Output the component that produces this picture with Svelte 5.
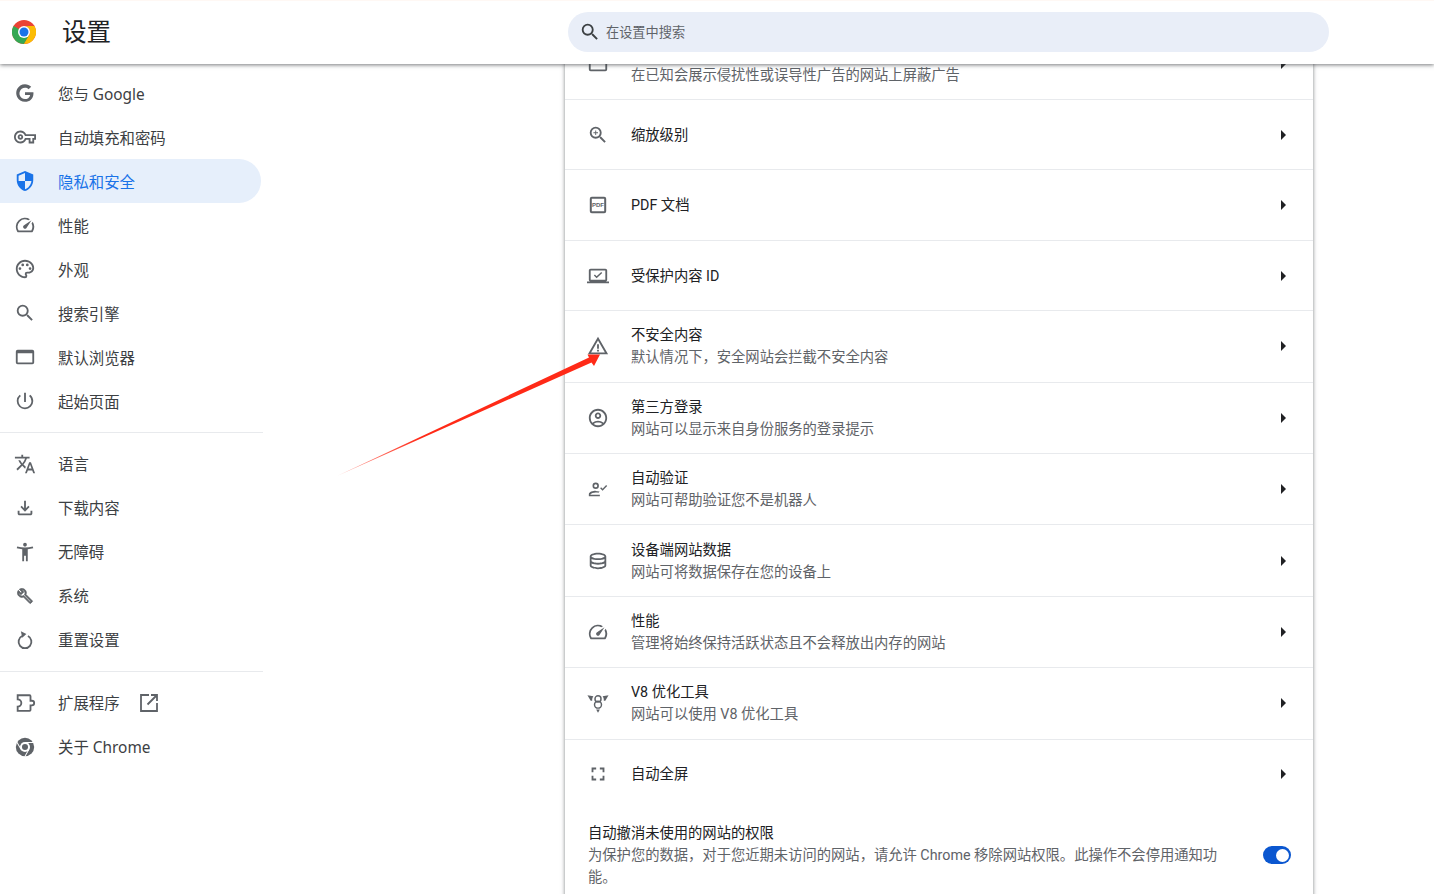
<script>
  const paths = {
    google: 'M21.35 11.1H12v3.2h5.59c-.25 1.37-1.01 2.53-2.15 3.3-.96.65-2.18 1.03-3.44 1.03-2.65 0-4.9-1.79-5.7-4.2-.2-.6-.32-1.25-.32-1.93s.12-1.33.32-1.93c.8-2.41 3.05-4.2 5.7-4.2 1.5 0 2.85.52 3.91 1.53l2.85-2.85C16.95 3.39 14.7 2.4 12 2.4 8.25 2.4 5 4.55 3.42 7.7 2.77 9 2.4 10.45 2.4 12s.37 3 1.02 4.3C5 19.45 8.25 21.6 12 21.6c2.6 0 4.78-.86 6.37-2.33 1.82-1.68 2.87-4.15 2.87-7.07 0-.38-.03-.75-.09-1.1z',
    key: 'M22 19h-6v-4h-2.68c-1.14 2.42-3.6 4-6.32 4-3.86 0-7-3.14-7-7s3.14-7 7-7c2.72 0 5.17 1.58 6.32 4H24v6h-2v4zm-4-2h2v-4h2v-2H11.94l-.23-.67C11.01 8.34 9.11 7 7 7c-2.76 0-5 2.24-5 5s2.24 5 5 5c2.11 0 4.01-1.34 4.71-3.33l.23-.67H18v4zM7 15c-1.65 0-3-1.35-3-3s1.35-3 3-3 3 1.35 3 3-1.35 3-3 3zm0-4c-.55 0-1 .45-1 1s.45 1 1 1 1-.45 1-1-.45-1-1-1z',
    shield: 'M12 1 3 5v6c0 5.55 3.84 10.74 9 12 5.16-1.26 9-6.45 9-12V5l-9-4zm0 10.99h7c-.53 4.12-3.28 7.79-7 8.94V12H5V6.3l7-3.11v8.8z',
    speed: 'M20.38 8.57l-1.23 1.85a8 8 0 0 1-.22 7.58H5.07A8 8 0 0 1 15.58 6.85l1.85-1.23A10 10 0 0 0 3.35 19a2 2 0 0 0 1.72 1h13.85a2 2 0 0 0 1.74-1 10 10 0 0 0-.27-10.44zm-9.79 6.84a2 2 0 0 0 2.83 0l5.66-8.49-8.49 5.66a2 2 0 0 0 0 2.83z',
    palette: 'M12 22C6.49 22 2 17.51 2 12S6.49 2 12 2s10 4.04 10 9c0 3.31-2.69 6-6 6h-1.77c-.28 0-.5.22-.5.5 0 .12.05.23.13.33.41.47.64 1.06.64 1.67A2.5 2.5 0 0 1 12 22zm0-18c-4.41 0-8 3.59-8 8s3.59 8 8 8c.28 0 .5-.22.5-.5a.54.54 0 0 0-.14-.35c-.41-.46-.63-1.05-.63-1.65a2.5 2.5 0 0 1 2.5-2.5H16c2.21 0 4-1.79 4-4 0-3.86-3.59-7-8-7zM6.5 10a1.5 1.5 0 1 0 0 3 1.5 1.5 0 0 0 0-3zm3-4a1.5 1.5 0 1 0 0 3 1.5 1.5 0 0 0 0-3zm5 0a1.5 1.5 0 1 0 0 3 1.5 1.5 0 0 0 0-3zm3 4a1.5 1.5 0 1 0 0 3 1.5 1.5 0 0 0 0-3z',
    search: 'M15.5 14h-.79l-.28-.27A6.471 6.471 0 0 0 16 9.5 6.5 6.5 0 1 0 9.5 16c1.61 0 3.09-.59 4.23-1.57l.27.28v.79l5 4.99L20.49 19l-4.99-5zm-6 0C7.01 14 5 11.99 5 9.5S7.01 5 9.5 5 14 7.01 14 9.5 11.99 14 9.5 14z',
    browser: 'M20 4H4a2 2 0 0 0-2 2v12a2 2 0 0 0 2 2h16a2 2 0 0 0 2-2V6a2 2 0 0 0-2-2zm0 14H4V8h16v10z',
    power: 'M13 3h-2v10h2V3zm4.83 2.17l-1.42 1.42A6.92 6.92 0 0 1 19 12c0 3.87-3.13 7-7 7A6.995 6.995 0 0 1 7.58 6.58L6.17 5.17A8.932 8.932 0 0 0 3 12a9 9 0 0 0 18 0c0-2.74-1.23-5.18-3.17-6.83z',
    translate: 'M12.87 15.07l-2.54-2.51.03-.03A17.52 17.52 0 0 0 14.07 6H17V4h-7V2H8v2H1v1.99h11.17C11.5 7.92 10.44 9.75 9 11.35 8.07 10.32 7.3 9.19 6.69 8h-2c.73 1.63 1.73 3.17 2.98 4.56l-5.09 5.02L4 19l5-5 3.11 3.11.76-2.04zM18.5 10h-2L12 22h2l1.12-3h4.75L21 22h2l-4.5-12zm-2.62 7l1.62-4.33L19.12 17h-3.24z',
    download: 'M18 15v3H6v-3H4v3c0 1.1.9 2 2 2h12c1.1 0 2-.9 2-2v-3h-2zm-1-4l-1.41-1.41L13 12.17V4h-2v8.17L8.41 9.59 7 11l5 5 5-5z',
    access: 'M20.5 6c-2.61.7-5.67 1-8.5 1s-5.89-.3-8.5-1L3 8c1.86.5 4 .83 6 1v13h2v-6h2v6h2V9c2-.17 4.14-.5 6-1l-.5-2zM12 6c1.1 0 2-.9 2-2s-.9-2-2-2-2 .9-2 2 .9 2 2 2z',
    wrench: 'M22.61 18.99l-9.08-9.08c.93-2.34.45-5.1-1.44-7C9.79.61 6.21.4 3.66 2.26L7.5 6.11 6.08 7.52 2.25 3.69C.39 6.23.6 9.82 2.9 12.11c1.86 1.86 4.57 2.35 6.89 1.48l9.11 9.11c.39.39 1.02.39 1.41 0l2.3-2.3c.4-.38.4-1.01 0-1.41zm-3 1.6l-9.46-9.46c-.61.45-1.29.72-2 .82-1.36.2-2.79-.21-3.83-1.25C3.37 9.76 2.93 8.5 3 7.26l3.09 3.09 4.24-4.24-3.09-3.09c1.24-.07 2.49.37 3.44 1.31a4.469 4.469 0 0 1 1.24 3.96 4.35 4.35 0 0 1-.88 1.96l9.45 9.45-.88.88z',
    zoom: 'M15.5 14h-.79l-.28-.27A6.471 6.471 0 0 0 16 9.5 6.5 6.5 0 1 0 9.5 16c1.61 0 3.09-.59 4.23-1.57l.27.28v.79l5 4.99L20.49 19l-4.99-5zm-6 0C7.01 14 5 11.99 5 9.5S7.01 5 9.5 5 14 7.01 14 9.5 11.99 14 9.5 14zM12 10h-2v2H9v-2H7V9h2V7h1v2h2v1z',
    laptop: 'M20 18c1.1 0 2-.9 2-2V6c0-1.1-.9-2-2-2H4c-1.1 0-2 .9-2 2v10c0 1.1.9 2 2 2H0v2h24v-2h-4zM4 6h16v10H4V6zm6.500 8.500L7.500 11.500l1.100-1.100 1.900 1.900 5-4.800 1.100 1.100-6.100 5.900z',
    warning: 'M1 21h22L12 2 1 21zm3.470-2L12 5.990 19.530 19H4.470zM11 16h2v2h-2zm0-6h2v5h-2z',
    account: 'M12 2C6.480 2 2 6.480 2 12s4.480 10 10 10 10-4.480 10-10S17.520 2 12 2zM7.350 18.500C8.660 17.560 10.260 17 12 17s3.340.56 4.650 1.500c-1.310.94-2.910 1.500-4.650 1.500s-3.340-.56-4.650-1.500zm10.790-1.380a9.947 9.947 0 0 0-12.280 0A7.957 7.957 0 0 1 4 12c0-4.420 3.580-8 8-8s8 3.580 8 8c0 1.950-.7 3.730-1.860 5.120zM12 6c-1.930 0-3.500 1.570-3.500 3.500S10.070 13 12 13s3.500-1.570 3.500-3.500S13.930 6 12 6zm0 5c-.83 0-1.500-.67-1.500-1.500S11.170 8 12 8s1.500.67 1.500 1.500S12.830 11 12 11z',
    fullscreen: 'M7 14H5v5h5v-2H7v-3zm-2-4h2V7h3V5H5v5zm12 7h-3v2h5v-5h-2v3zM14 5v2h3v3h2V5h-5z',
    personCheck: 'M9.500 5a3.500 3.500 0 1 0 0 7 3.500 3.500 0 0 0 0-7zm0 1.800a1.700 1.700 0 1 1 0 3.400 1.700 1.700 0 0 1 0-3.400zM9.500 14c-2.900 0-7.500 1.200-7.500 3.700V20h12v-1.800H3.800v-.5c.4-1 3.500-2 5.700-2 1 0 2 .1 3 .4l1.300-1.300c-1.600-.5-3.200-.7-4.300-.7zM22 8.700l-1.100-1.100-3.900 4-1.600-1.600-1.100 1.100 2.700 2.700 5-5.100z',
    database: 'M12 3C7 3 3 4.800 3 7v10c0 2.200 4 4 9 4s9-1.800 9-4V7c0-2.200-4-4-9-4zm0 2c4.400 0 7 1.400 7 2s-2.600 2-7 2-7-1.400-7-2 2.600-2 7-2zM5 9.700C6.600 10.500 9.100 11 12 11s5.400-.5 7-1.300V12c0 .6-2.600 2-7 2s-7-1.400-7-2V9.700zM12 19c-4.400 0-7-1.400-7-2v-2.300c1.600.8 4.100 1.300 7 1.300s5.400-.5 7-1.300V17c0 .6-2.600 2-7 2z'
  };

  const group1 = [
    { icon: 'google', label: '您与 Google' },
    { icon: 'key', label: '自动填充和密码' },
    { icon: 'shield', label: '隐私和安全', active: true },
    { icon: 'speed', label: '性能' },
    { icon: 'palette', label: '外观' },
    { icon: 'search', label: '搜索引擎' },
    { icon: 'browser', label: '默认浏览器' },
    { icon: 'power', label: '起始页面' }
  ];

  const rows = [
    { icon: 'browser', title: '侵入性广告', sub: '在已知会展示侵扰性或误导性广告的网站上屏蔽广告' },
    { icon: 'zoom', title: '缩放级别' },
    { icon: 'pdf', title: 'PDF 文档' },
    { icon: 'laptop', title: '受保护内容 ID' },
    { icon: 'warning', title: '不安全内容', sub: '默认情况下，安全网站会拦截不安全内容' },
    { icon: 'account', title: '第三方登录', sub: '网站可以显示来自身份服务的登录提示' },
    { icon: 'personCheck', title: '自动验证', sub: '网站可帮助验证您不是机器人' },
    { icon: 'database', title: '设备端网站数据', sub: '网站可将数据保存在您的设备上' },
    { icon: 'speed', title: '性能', sub: '管理将始终保持活跃状态且不会释放出内存的网站' },
    { icon: 'v8', title: 'V8 优化工具', sub: '网站可以使用 V8 优化工具' },
    { icon: 'fullscreen', title: '自动全屏' }
  ];
</script>

<div class="page">
  <header class="topbar">
    <div class="brand">
      <svg class="logo" viewBox="0 0 24 24" width="24" height="24">
        <circle cx="12" cy="12" r="12" fill="#ea4335" />
        <path d="M12 12 1.600 18A12 12 0 0 1 1.600 6z" fill="#34a853" />
        <path d="M12 24A12 12 0 0 1 1.600 18L6.800 9 12 12l5.200 3z" fill="#34a853" />
        <path d="M12 6h10.400A12 12 0 0 1 12 24l5.200-9A6 6 0 0 0 12 6z" fill="#fbbc04" />
        <circle cx="12" cy="12" r="6" fill="#fff" />
        <circle cx="12" cy="12" r="4.500" fill="#1a73e8" />
      </svg>
      <h1>设置</h1>
    </div>
    <div class="search">
      <svg viewBox="0 0 24 24" width="22" height="22"><path d={paths.search} /></svg>
      <span>在设置中搜索</span>
    </div>
  </header>

  <div class="body">
    <nav class="side">
      {#each group1 as item}
        <div class="item" class:active={item.active}>
          <svg viewBox="0 0 24 24" width="22" height="22"><path d={paths[item.icon]} /></svg>
          <span>{item.label}</span>
        </div>
      {/each}
      <hr />
      <div class="item">
        <svg viewBox="0 0 24 24" width="22" height="22"><path d={paths.translate} /></svg>
        <span>语言</span>
      </div>
      <div class="item">
        <svg viewBox="0 0 24 24" width="22" height="22"><path d={paths.download} /></svg>
        <span>下载内容</span>
      </div>
      <div class="item">
        <svg viewBox="0 0 24 24" width="22" height="22"><path d={paths.access} /></svg>
        <span>无障碍</span>
      </div>
      <div class="item">
        <svg viewBox="-4 -4 32 32" width="22" height="22"><path class="thick" d={paths.wrench} /></svg>
        <span>系统</span>
      </div>
      <div class="item">
        <svg viewBox="0 0 24 24" width="22" height="22">
          <path class="line" d="M8.800 7.700a7 7 0 1 0 6.400 0" />
          <path d="M7.500 2.500l6 3-4.500 4z" />
        </svg>
        <span>重置设置</span>
      </div>
      <hr />
      <div class="item">
        <svg viewBox="0 0 24 24" width="22" height="22">
          <path class="line" d="M4 3.500h13a1 1 0 0 1 1 1V9.500h1.500a2.500 2.500 0 0 1 0 5H18v5a1 1 0 0 1-1 1H4V16a4 4 0 0 0 0-8z" />
        </svg>
        <span>扩展程序</span>
        <svg class="open" viewBox="0 0 18 18" width="18" height="18">
          <path d="M9 1H1v16h16V9M11 1h6v6M17 1 7.500 10.500" />
        </svg>
      </div>
      <div class="item">
        <svg viewBox="0 0 24 24" width="22" height="22">
          <circle cx="12" cy="12" r="10" />
          <circle cx="12" cy="12" r="5.500" class="hole" />
          <circle cx="12" cy="12" r="3.300" />
          <path class="hole" d="M12 6.500h9.300v1H12zM7.200 14.800 2.600 6.800l.9-.5 4.600 8zM16.800 14.800l-4.600 8-.9-.5 4.600-8z" />
        </svg>
        <span>关于 Chrome</span>
      </div>
    </nav>

    <main class="main">
      <section class="card">
        {#each rows as row, i}
          <div class="row" class:two={row.sub} class:last={i === rows.length - 1}>
            <div class="row-icon">
              {#if row.icon === 'pdf'}
                <svg viewBox="0 0 22 22" width="22" height="22">
                  <rect class="line" x="3.800" y="3.800" width="14.400" height="14.400" rx="1" />
                  <text x="11" y="13" class="pdf">PDF</text>
                </svg>
              {:else if row.icon === 'v8'}
                <svg viewBox="0 0 24 24" width="22" height="22">
                  <path d="M.5 3.500l6.500 1C6 6 5.500 7.500 5.700 9.500H4zM23.500 3.500l-6.500 1c1 1.500 1.500 3 1.300 5H20z" />
                  <circle class="thin" cx="12" cy="7.500" r="3.300" />
                  <circle class="thin" cx="12" cy="13.800" r="3.800" />
                  <path d="M10 19h4l-2 3.500z" />
                </svg>
              {:else}
                <svg viewBox="0 0 24 24" width="22" height="22"><path d={paths[row.icon]} /></svg>
              {/if}
            </div>
            <div class="row-text">
              <div class="title">{row.title}</div>
              {#if row.sub}<div class="sub">{row.sub}</div>{/if}
            </div>
            <span class="chevron"></span>
          </div>
        {/each}
        <div class="revoke">
          <div class="revoke-text">
            <div class="title">自动撤消未使用的网站的权限</div>
            <div class="sub">为保护您的数据，对于您近期未访问的网站，请允许 Chrome 移除网站权限。此操作不会停用通知功能。</div>
          </div>
          <span class="toggle"><span class="knob"></span></span>
        </div>
      </section>
    </main>
  </div>

  <svg class="arrow" viewBox="0 0 1434 894" width="1434" height="894">
    <defs>
      <linearGradient id="arrow-fade" gradientUnits="userSpaceOnUse" x1="337" y1="476" x2="420" y2="437">
        <stop offset="0" stop-color="#ff2a17" stop-opacity="0.4" />
        <stop offset="1" stop-color="#ff2a17" />
      </linearGradient>
    </defs>
    <polygon points="337,476 589,357.500 587.500,354.500 600,354.500 594,366 591.500,362.500" fill="url(#arrow-fade)" />
  </svg>
</div>

<style>
  :global(body) {
    margin: 0;
    background: #fff;
  }

  .page {
    position: relative;
    width: 1434px;
    height: 894px;
    overflow: hidden;
    font-family: Roboto, "Noto Sans CJK SC", sans-serif;
    color: #202124;
  }

  svg {
    display: block;
    flex-shrink: 0;
    fill: #5f6368;
  }

  .topbar {
    position: relative;
    z-index: 2;
    display: flex;
    align-items: center;
    box-sizing: border-box;
    height: 64px;
    background: #fff;
    box-shadow: inset 0 1px 0 #fff8f4, 0 1px 4px rgba(60, 64, 67, 0.7);
  }

  .brand {
    display: flex;
    align-items: center;
    width: 568px;
    padding-left: 12px;
    box-sizing: border-box;
  }

  .logo {
    margin-right: 26px;
  }

  h1 {
    margin: 0;
    padding-top: 2px;
    font-size: 24.5px;
    font-weight: 400;
    line-height: 32px;
  }

  .search {
    display: flex;
    align-items: center;
    gap: 5px;
    box-sizing: border-box;
    width: 761px;
    height: 40px;
    padding-left: 11px;
    border-radius: 20px;
    background: #e9eef8;
    font-size: 13.2px;
    color: #5f6368;
  }

  .search span {
    padding-bottom: 2px;
  }

  .search svg {
    fill: #3c4043;
  }

  .body {
    display: flex;
  }

  .side {
    width: 263px;
    padding-top: 7px;
    margin-right: 302px;
    flex-shrink: 0;
    font-family: "Noto Sans", "Noto Sans CJK SC", sans-serif;
  }

  .item {
    display: flex;
    align-items: center;
    gap: 22px;
    height: 44px;
    width: 261px;
    box-sizing: border-box;
    padding-left: 14px;
    border-radius: 0 22px 22px 0;
    font-size: 15.4px;
    color: #3c4043;
  }

  .item.active {
    background: #e6effb;
    color: #1a73e8;
  }

  .item.active svg {
    fill: #1a73e8;
  }

  .item .open {
    fill: none;
    stroke: #5f6368;
    stroke-width: 1.800;
    margin-left: -2px;
  }

  .hole {
    fill: #fff;
  }

  .thick {
    stroke: #5f6368;
    stroke-width: 1;
  }

  .line {
    fill: none;
    stroke: #5f6368;
    stroke-width: 2;
  }

  .thin {
    fill: none;
    stroke: #5f6368;
    stroke-width: 1.600;
  }

  hr {
    height: 1px;
    margin: 9.4px 0 8.6px;
    border: 0;
    background: #e8eaed;
  }

  .main {
    width: 748px;
    margin-top: -35.3px;
  }

  .card {
    background: #fff;
    box-shadow: 0 0 4px rgba(60, 64, 67, 0.65);
    padding-bottom: 40px;
  }

  .row {
    display: flex;
    align-items: center;
    box-sizing: border-box;
    height: 70.4px;
    padding: 0 27px 0 22px;
    border-bottom: 1px solid #e8eaed;
  }

  .row.two {
    height: 71.4px;
  }

  .row.last {
    height: 69.4px;
    border-bottom: 0;
  }

  .row-icon {
    width: 22px;
    margin-right: 22px;
  }

  .row-text {
    flex: 1;
    min-width: 0;
  }

  .title {
    font-size: 14.3px;
    line-height: 22px;
    color: #202124;
  }

  .sub {
    font-size: 14.3px;
    line-height: 22px;
    color: #5f6368;
  }

  .pdf {
    font-family: "Liberation Sans", sans-serif;
    font-size: 6px;
    font-weight: 700;
    text-anchor: middle;
    fill: #5f6368;
  }

  .chevron {
    width: 0;
    height: 0;
    border-left: 5px solid #202124;
    border-top: 5px solid transparent;
    border-bottom: 5px solid transparent;
  }

  .revoke {
    display: flex;
    align-items: center;
    padding: 13px 22px 6px 23px;
  }

  .revoke-text {
    width: 632px;
    margin-right: 44px;
  }

  .toggle {
    position: relative;
    width: 28px;
    height: 18px;
    border-radius: 9px;
    background: #0b57d0;
  }

  .knob {
    position: absolute;
    top: 2.500px;
    right: 2px;
    width: 13px;
    height: 13px;
    border-radius: 50%;
    background: #fff;
  }

  .arrow {
    position: absolute;
    top: 0;
    left: 0;
    z-index: 1;
    pointer-events: none;
  }
</style>
